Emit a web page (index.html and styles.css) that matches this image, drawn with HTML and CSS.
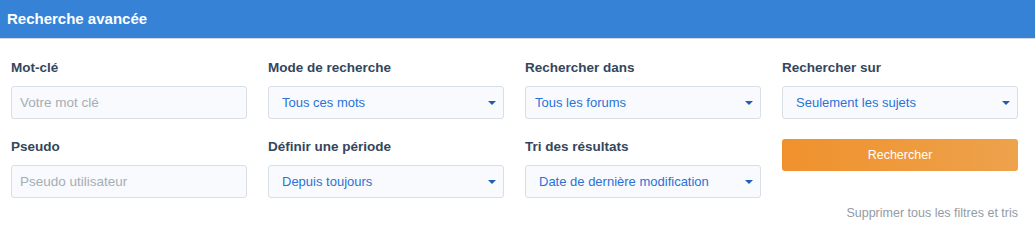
FILE: index.html
```html
<!DOCTYPE html>
<html lang="fr">
<head>
<meta charset="utf-8">
<title>Recherche avancée</title>
<link rel="stylesheet" href="styles.css">
</head>
<body>
<div class="panel">
  <div class="panel-header">Recherche avancée</div>
  <form class="panel-body">
    <div class="grid">
      <div class="field">
        <label class="label">Mot-clé</label>
        <input class="control input" type="text" placeholder="Votre mot clé">
      </div>
      <div class="field">
        <label class="label">Mode de recherche</label>
        <div class="control select"><span>Tous ces mots</span><svg class="caret" width="8" height="4" viewBox="0 0 8 4"><path d="M0 0H8L4 4Z"/></svg></div>
      </div>
      <div class="field">
        <label class="label">Rechercher dans</label>
        <div class="control select select-narrow"><span>Tous les forums</span><svg class="caret" width="8" height="4" viewBox="0 0 8 4"><path d="M0 0H8L4 4Z"/></svg></div>
      </div>
      <div class="field">
        <label class="label">Rechercher sur</label>
        <div class="control select"><span>Seulement les sujets</span><svg class="caret" width="8" height="4" viewBox="0 0 8 4"><path d="M0 0H8L4 4Z"/></svg></div>
      </div>
      <div class="field">
        <label class="label">Pseudo</label>
        <input class="control input" type="text" placeholder="Pseudo utilisateur">
      </div>
      <div class="field">
        <label class="label">Définir une période</label>
        <div class="control select"><span>Depuis toujours</span><svg class="caret" width="8" height="4" viewBox="0 0 8 4"><path d="M0 0H8L4 4Z"/></svg></div>
      </div>
      <div class="field">
        <label class="label">Tri des résultats</label>
        <div class="control select"><span>Date de dernière modification</span><svg class="caret" width="8" height="4" viewBox="0 0 8 4"><path d="M0 0H8L4 4Z"/></svg></div>
      </div>
      <div class="field">
        <button class="btn" type="button">Rechercher</button>
      </div>
    </div>
    <div class="footer">
      <a class="reset" href="#">Supprimer tous les filtres et tris</a>
    </div>
  </form>
</div>
</body>
</html>
```

FILE: styles.css
```css
* { box-sizing: border-box; }

html, body {
  margin: 0;
  padding: 0;
  background: #ffffff;
  font-family: "Liberation Sans", Arial, sans-serif;
}

.panel {
  width: 1035px;
}

.panel-header {
  height: 39px;
  background: #3582d7;
  border-bottom: 1px solid #d3d9e0;
  color: #ffffff;
  font-weight: bold;
  font-size: 15px;
  line-height: 38px;
  padding-left: 7px;
}

.panel-body {
  margin: 0;
  padding: 20px 17px 0 11px;
}

.grid {
  display: grid;
  grid-template-columns: repeat(4, 236px);
  column-gap: 21px;
  row-gap: 19px;
}

.field {
  display: flex;
  flex-direction: column;
}

.label {
  font-size: 13.5px;
  font-weight: bold;
  color: #34465c;
  line-height: 18px;
  height: 18px;
  margin-bottom: 9px;
}

.control {
  height: 33px;
  width: 100%;
  border: 1px solid #d9dfe6;
  border-radius: 3px;
  background: #f8fafd;
  font-family: "Liberation Sans", Arial, sans-serif;
  font-size: 13px;
}

.input {
  padding: 0 8px;
  font-size: 13.5px;
  color: #2f3b4a;
  outline: none;
}

.input::placeholder {
  color: #a6adb6;
}

.select {
  display: flex;
  align-items: center;
  justify-content: space-between;
  padding: 0 7px 0 13px;
  color: #2b72d8;
}

.select-narrow {
  padding-left: 9px;
}

.caret {
  fill: #1d5fb6;
  flex: none;
}

.btn {
  height: 32px;
  width: 100%;
  margin-top: 1px;
  border: none;
  border-radius: 3px;
  background: linear-gradient(to right, #f0912d, #eda24c);
  color: #ffffff;
  font-family: "Liberation Sans", Arial, sans-serif;
  font-size: 12.5px;
  padding: 0;
}

.footer {
  display: flex;
  justify-content: flex-end;
  margin-top: 7px;
}

.reset {
  font-size: 12.5px;
  line-height: 16px;
  color: #949aa3;
  text-decoration: none;
}
```
